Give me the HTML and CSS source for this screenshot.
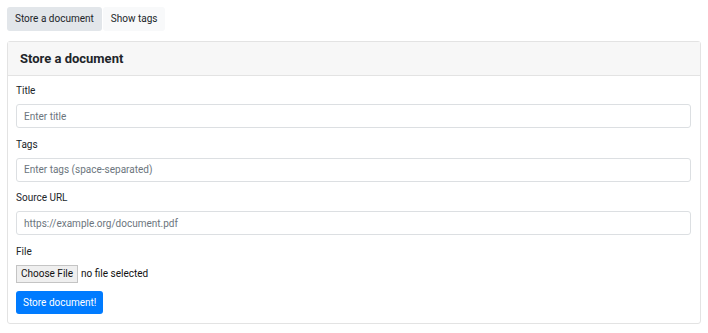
FILE: index.html
```html
<!DOCTYPE html>
<html lang="en">
<head>
    <meta charset="UTF-8">
    <meta name="viewport" content="width=device-width, initial-scale=1.0">
    <title>Store a document</title>
    <link rel="stylesheet" href="styles.css">
</head>
<body>
    <nav class="tabs">
        <a class="tab active" href="#">Store a document</a>
        <a class="tab" href="#">Show tags</a>
    </nav>

    <div class="card">
        <div class="card-header">Store a document</div>
        <form class="card-body">
            <div class="form-group">
                <label for="title">Title</label>
                <input type="text" id="title" placeholder="Enter title">
            </div>

            <div class="form-group">
                <label for="tags">Tags</label>
                <input type="text" id="tags" placeholder="Enter tags (space-separated)">
            </div>

            <div class="form-group">
                <label for="source">Source URL</label>
                <input type="text" id="source" placeholder="https://example.org/document.pdf">
            </div>

            <div class="form-group">
                <label for="file">File</label>
                <label class="file-picker">
                    <input type="file" id="file">
                    <span class="file-btn">Choose File</span>
                    <span class="file-name">no file selected</span>
                </label>
            </div>

            <button type="submit" class="store-btn">Store document!</button>
        </form>
    </div>
</body>
</html>
```

FILE: styles.css
```css
* {
    margin: 0;
    padding: 0;
    box-sizing: border-box;
}

body {
    font-family: Roboto, "Liberation Sans", sans-serif;
    font-size: 10px;
    line-height: 16px;
    color: #212529;
    background: white;
    padding: 7px;
}

.tabs {
    display: flex;
    gap: 1px;
}

.tab {
    display: block;
    height: 24px;
    line-height: 24px;
    padding: 0 8px;
    border-radius: 3px;
    color: #212529;
    text-decoration: none;
    background: #f8f9fa;
}

.tab.active {
    background: #e2e6ea;
}

.card {
    margin-top: 10px;
    border: 1px solid #e3e3e3;
    border-radius: 3px;
}

.card-header {
    height: 34px;
    line-height: 33px;
    padding: 0 12px;
    background: #f7f7f7;
    border-bottom: 1px solid #e3e3e3;
    font-size: 13px;
    font-weight: 700;
}

.card-body {
    padding: 7px 9px 9px 8px;
}

.form-group {
    margin-bottom: 8.5px;
}

label {
    display: block;
    margin-bottom: 5px;
}

input[type="text"] {
    display: block;
    width: 100%;
    height: 24px;
    padding: 0 7px;
    border: 1px solid #dcdfe2;
    border-radius: 3px;
    font-family: inherit;
    font-size: 10px;
    color: #495057;
}

input[type="text"]::placeholder {
    color: #6c757d;
}

.file-picker {
    display: flex;
    align-items: center;
    height: 18px;
    margin: 0;
    color: #111;
    cursor: pointer;
}

.file-picker input {
    display: none;
}

.file-btn {
    height: 18px;
    line-height: 16px;
    padding: 0 4px;
    margin-right: 3px;
    background: #efefef;
    border: 1px solid #c4c4c4;
}

.store-btn {
    display: block;
    height: 23px;
    padding: 0 7px;
    margin-top: 1.5px;
    background: #007bff;
    color: white;
    border: none;
    border-radius: 3px;
    font-family: inherit;
    font-size: 10px;
    cursor: pointer;
}
```
